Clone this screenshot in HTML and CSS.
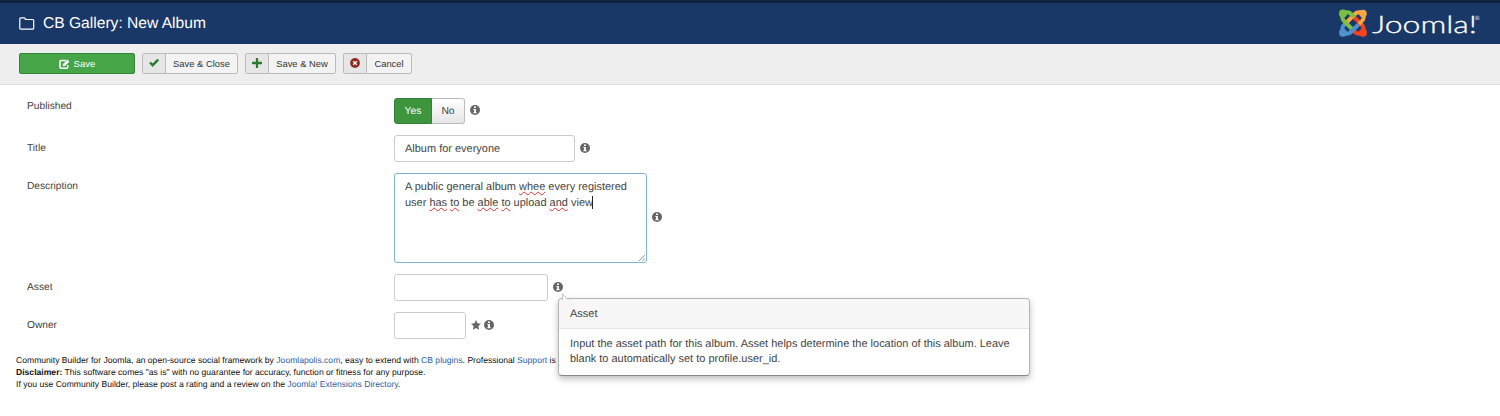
FILE: index.html
```html
<!DOCTYPE html>
<html lang="en">
<head>
    <meta charset="UTF-8">
    <meta name="viewport" content="width=device-width, initial-scale=1.0">
    <title>CB Gallery: New Album</title>
    <link rel="stylesheet" href="styles.css">
</head>
<body>
    <!-- Shared icons -->
    <svg class="sprite" aria-hidden="true">
        <symbol id="icon-info" viewBox="0 0 10 10">
            <circle cx="5" cy="5" r="5" fill="currentColor"/>
            <path d="M4 1.6h2v1.5H4zM3.4 4h2.5v3.2h.8v1H3.3v-1h.8V5h-.7z" fill="#fff"/>
        </symbol>
    </svg>

    <header class="header">
        <h1 class="page-title">
            <svg class="folder-icon" viewBox="0 0 16 13">
                <path d="M.8 11.2V1.8q0-1 1-1h3.5q1 0 1 1v.7h7.4q1 0 1 1v7.7q0 1-1 1H1.8q-1 0-1-1z" fill="none" stroke="#fff" stroke-width="1.2"/>
            </svg>
            <span>CB Gallery: New Album</span>
        </h1>
        <svg class="logo" viewBox="0 0 144 30">
            <g fill="none" stroke-width="4" stroke-linejoin="round">
                <path d="M5 25Q3 19 7 16l2-2M5 25Q11 27 14 23l8-8" stroke="#5091cd"/>
                <path d="M25 25Q19 27 16 23l-2-2M25 25Q27 19 23 16l-8-8" stroke="#f44321"/>
                <path d="M25 5Q27 11 23 14l-2 2M25 5Q19 3 16 7l-8 8" stroke="#f9a541"/>
                <path d="M5 5Q11 3 14 7l2 2M5 5Q3 11 7 14l8 8" stroke="#7ac143"/>
                <path d="M12.500 24l4.500-4.500" stroke="#5091cd"/>
            </g>
            <g>
                <circle cx="5" cy="5.500" r="4" fill="#7ac143"/>
                <circle cx="25" cy="5.500" r="3.800" fill="#f9a541"/>
                <circle cx="5" cy="24.800" r="4" fill="#5091cd"/>
                <circle cx="25" cy="24.800" r="4" fill="#f44321"/>
            </g>
            <text class="logo-text" x="34" y="24.500" textLength="105" lengthAdjust="spacingAndGlyphs">Joomla!</text>
            <text class="logo-mark" x="137" y="12">®</text>
        </svg>
    </header>

    <nav class="toolbar">
        <button class="btn btn-save">
            <svg viewBox="0 0 11 10" width="11" height="10">
                <path d="M7 1.500H2q-1 0-1 1v5.700q0 1 1 1h5.700q1 0 1-1V6" fill="none" stroke="#fff" stroke-width="1.500"/>
                <path d="M3.800 7.200V5.300L8.600.5l1.900 1.900-4.800 4.800z" fill="#fff"/>
            </svg>
            <span>Save</span>
        </button>
        <button class="btn btn-close">
            <span class="btn-icon">
                <svg viewBox="0 0 10 10" width="10" height="10"><path d="M1 4.500l2.700 2.700L9.200 1.500" fill="none" stroke="#2c7a32" stroke-width="2.400"/></svg>
            </span>
            <span class="btn-label">Save &amp; Close</span>
        </button>
        <button class="btn btn-new">
            <span class="btn-icon">
                <svg viewBox="0 0 10 10" width="10" height="10"><path d="M5 0v10M0 5h10" stroke="#2c7a32" stroke-width="2.300"/></svg>
            </span>
            <span class="btn-label">Save &amp; New</span>
        </button>
        <button class="btn btn-cancel">
            <span class="btn-icon">
                <svg viewBox="0 0 10 10" width="10" height="10"><circle cx="5" cy="5" r="4.900" fill="#942a25"/><path d="M3.200 3.200l3.600 3.600M6.800 3.200L3.200 6.800" stroke="#fff" stroke-width="1.400"/></svg>
            </span>
            <span class="btn-label">Cancel</span>
        </button>
    </nav>

    <main class="form">
        <div class="form-row row-published">
            <div class="form-label">Published</div>
            <div class="controls">
                <div class="switch">
                    <span class="switch-option active">Yes</span>
                    <span class="switch-option">No</span>
                </div>
                <svg class="info"><use href="#icon-info"/></svg>
            </div>
        </div>

        <div class="form-row row-title">
            <div class="form-label">Title</div>
            <div class="controls">
                <div class="field field-title">Album for everyone</div>
                <svg class="info"><use href="#icon-info"/></svg>
            </div>
        </div>

        <div class="form-row row-description">
            <div class="form-label">Description</div>
            <div class="controls">
                <div class="field field-description">
                    A public general album <u>whee</u> every registered<br>
                    user <u>has</u> <u>to</u> be <u>able</u> <u>to</u> upload <u>and</u> view<span class="caret"></span>
                    <svg class="resizer" viewBox="0 0 8 8"><path d="M1 8l7-7M5 8l3-3" stroke="#777" stroke-width=".9"/></svg>
                </div>
                <svg class="info"><use href="#icon-info"/></svg>
            </div>
        </div>

        <div class="form-row row-asset">
            <div class="form-label">Asset</div>
            <div class="controls">
                <div class="field field-asset"></div>
                <div class="info-anchor">
                    <svg class="info"><use href="#icon-info"/></svg>
                    <div class="popover">
                        <svg class="popover-tip" viewBox="0 0 7 7"><path d="M.5 7V.8L6.500 7" fill="#f7f7f7" stroke="#c4c4c4"/></svg>
                        <div class="popover-title">Asset</div>
                        <div class="popover-content">
                            Input the asset path for this album. Asset helps determine the location of this album. Leave<br>
                            blank to automatically set to profile.user_id.
                        </div>
                    </div>
                </div>
            </div>
        </div>

        <div class="form-row row-owner">
            <div class="form-label">Owner</div>
            <div class="controls">
                <div class="field field-owner"></div>
                <svg class="star" viewBox="0 0 10 10"><path d="M5 0l1.500 3.300 3.500.4-2.600 2.400.7 3.600L5 7.900 1.900 9.700l.7-3.600L0 3.700l3.500-.4z" fill="currentColor"/></svg>
                <svg class="info"><use href="#icon-info"/></svg>
            </div>
        </div>
    </main>

    <footer class="footer">
        <p>Community Builder for Joomla, an open-source social framework by <a>Joomlapolis.com</a>, easy to extend with <a>CB plugins</a>. Professional <a>Support</a> is</p>
        <p><b>Disclaimer:</b> This software comes "as is" with no guarantee for accuracy, function or fitness for any purpose.</p>
        <p>If you use Community Builder, please post a rating and a review on the <a>Joomla! Extensions Directory</a>.</p>
    </footer>
</body>
</html>
```
FILE: styles.css
```css
:root {
    --header-blue: #1a3867;
    --text: #444;
    --link: #2a62a8;
    --green: #46a546;
    --border: #ccc;
}

* {
    margin: 0;
    padding: 0;
    box-sizing: border-box;
}

body {
    font-family: "Liberation Sans", Arial, sans-serif;
    font-size: 10.97px;
    color: var(--text);
    background: #fff;
    height: 416px;
    overflow: hidden;
    text-rendering: geometricPrecision;
}

svg {
    display: block;
    flex-shrink: 0;
}

.sprite {
    display: none;
}

/* Header */
.header {
    display: flex;
    justify-content: space-between;
    height: 44px;
    padding: 5px 18px 0 19px;
    background: var(--header-blue);
    border-top: 3px solid #10233f;
}

.page-title {
    display: flex;
    align-items: center;
    gap: 8px;
    height: 31px;
    font-size: 15.6px;
    font-weight: normal;
    color: #fff;
}

.folder-icon {
    width: 16px;
    height: 13px;
}

.logo {
    width: 144px;
    height: 30px;
}

.logo-text {
    font-family: Lato, sans-serif;
    font-weight: 300;
    font-size: 24px;
    fill: #fff;
    stroke: #fff;
    stroke-width: .3;
}

.logo-mark {
    font-size: 6px;
    fill: #fff;
}

/* Toolbar */
.toolbar {
    display: flex;
    gap: 7px;
    height: 41px;
    padding: 9px 19px;
    background: #eee;
    border-bottom: 1px solid #dedede;
}

.btn {
    display: flex;
    align-items: stretch;
    height: 21px;
    border: 1px solid #bbb;
    border-radius: 2px;
    background: #f3f3f3;
    font-family: inherit;
    font-size: 9.4px;
    color: #333;
    overflow: hidden;
}

.btn-save {
    width: 116px;
    align-items: center;
    justify-content: center;
    gap: 4px;
    background: var(--green);
    border-color: #33853a;
    font-size: 9.6px;
    color: #fff;
}

.btn-close { width: 96px; }
.btn-new { width: 91px; }
.btn-cancel { width: 69px; }

.btn-icon {
    display: flex;
    align-items: center;
    justify-content: center;
    width: 23px;
    padding-bottom: 1px;
    background: #e6e6e6;
    border-right: 1px solid #bbb;
}

.btn-label {
    flex: 1;
    align-self: center;
    text-align: center;
    white-space: nowrap;
}

/* Form */
.form-row {
    display: flex;
    padding-left: 27px;
}

.row-published { height: 50px; padding-top: 13px; }
.row-title { height: 38px; }
.row-description { height: 101px; }
.row-asset { height: 38px; }
.row-owner { height: 42px; }

.form-label {
    width: 367px;
    padding-top: 7px;
    font-size: 10.2px;
    line-height: 13px;
}

.row-published .form-label {
    padding-top: 2px;
}

.controls {
    display: flex;
    align-items: center;
    align-self: flex-start;
}

.switch {
    display: flex;
    height: 26px;
}

.switch-option {
    display: flex;
    align-items: center;
    justify-content: center;
    width: 33px;
    border: 1px solid #bbb;
    border-left: 0;
    border-radius: 0 3px 3px 0;
    background: linear-gradient(#fff, #e6e6e6);
    font-size: 10.3px;
}

.switch-option.active {
    width: 38px;
    border: 1px solid #34803a;
    border-radius: 3px 0 0 3px;
    background: #3d953e;
    color: #fff;
}

.field {
    position: relative;
    height: 27px;
    padding: 0 10px;
    border: 1px solid var(--border);
    border-radius: 3px;
    line-height: 26px;
    white-space: nowrap;
}

.field-title { width: 181px; }
.field-asset { width: 154px; }
.field-owner { width: 72px; }

.field-description {
    width: 253px;
    height: 90px;
    padding-top: 6px;
    border-color: #7eb4dc;
    line-height: 15.5px;
}

.field u {
    text-decoration: underline wavy #e03030 .7px;
    text-underline-offset: 1px;
}

.caret {
    display: inline-block;
    width: 1px;
    height: 13px;
    margin-left: -1px;
    background: #222;
    vertical-align: -3px;
}

.resizer {
    position: absolute;
    right: 1px;
    bottom: 1px;
    width: 7px;
    height: 7px;
}

.info,
.star {
    width: 10px;
    height: 10px;
    margin-left: 5px;
    margin-bottom: 2px;
    color: #666;
}

.star + .info {
    margin-left: 3px;
}

/* Popover */
.info-anchor {
    position: relative;
}

.popover {
    position: absolute;
    top: 16px;
    left: 10px;
    width: 472px;
    height: 78px;
    border: 1px solid #b5b5b5;
    border-bottom-color: #888;
    border-radius: 4px;
    background: #fff;
    box-shadow: 0 3px 6px rgba(0, 0, 0, .25);
}

.popover-tip {
    position: absolute;
    top: -6px;
    left: 3px;
    width: 7px;
    height: 7px;
}

.popover-title {
    height: 30px;
    padding-left: 11px;
    border-bottom: 1px solid #e6e6e6;
    border-radius: 4px 4px 0 0;
    background: #f7f7f7;
    line-height: 30px;
}

.popover-content {
    padding: 8px 11px;
    line-height: 15.5px;
    white-space: nowrap;
}

/* Footer */
.footer {
    padding-left: 16px;
    font-size: 8.6px;
    line-height: 12px;
    color: #111;
    white-space: nowrap;
}

.footer a {
    color: var(--link);
}
```
